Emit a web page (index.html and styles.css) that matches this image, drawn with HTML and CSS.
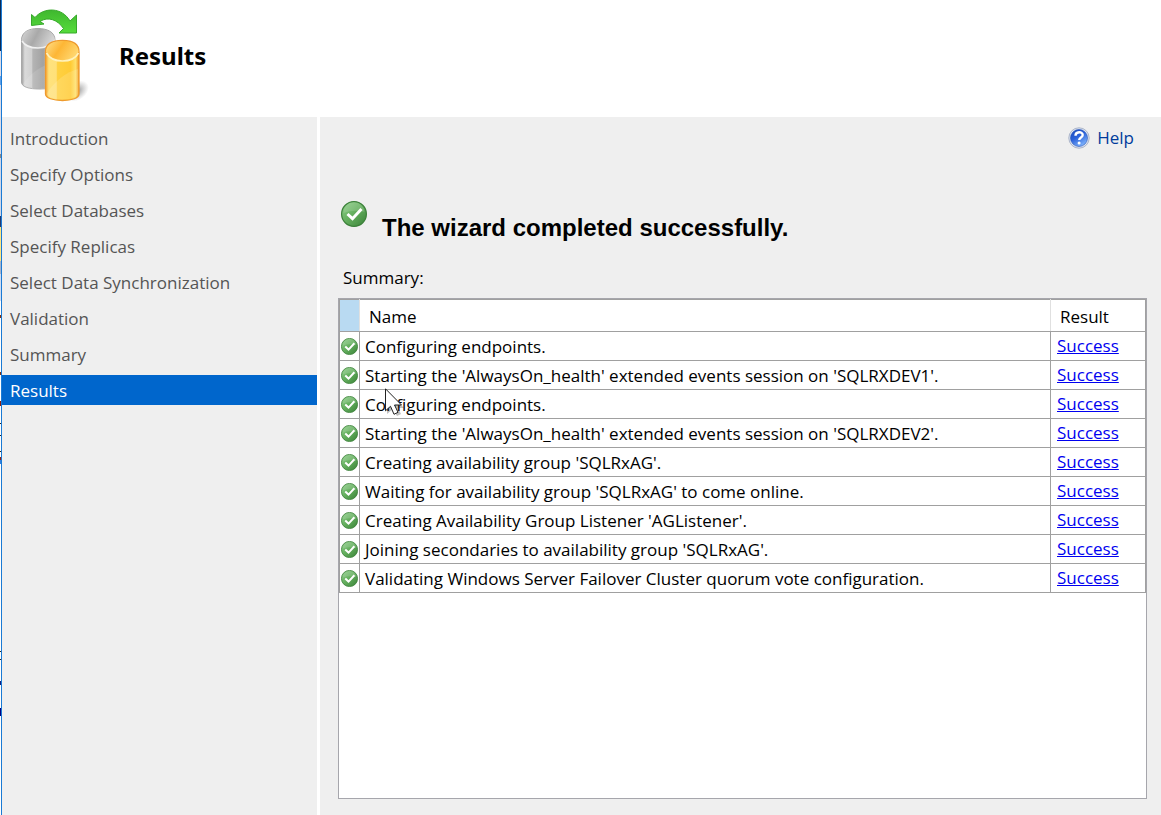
FILE: index.html
```html
<!DOCTYPE html>
<html lang="en">
<head>
  <meta charset="UTF-8" />
  <meta name="viewport" content="width=device-width, initial-scale=1" />
  <title>Results</title>
  <link rel="stylesheet" href="styles.css">
</head>
<body>
  <!-- shared icons -->
  <svg class="defs" width="0" height="0" aria-hidden="true">
    <defs>
      <linearGradient id="ok-fill" x1="0" y1="0" x2="1" y2="1">
        <stop offset="0" stop-color="#8fd08a" />
        <stop offset="0.5" stop-color="#62ad5c" />
        <stop offset="1" stop-color="#3a8238" />
      </linearGradient>
      <symbol id="ok" viewBox="0 0 26 26">
        <circle cx="13" cy="13" r="12.4" fill="url(#ok-fill)" stroke="#3b8039" stroke-width="1.2" />
        <path d="M2.500 12a10.500 10.500 0 0 1 21-1Q13 8 2.500 12z" fill="#fff" opacity="0.14" />
        <path d="M6.500 13l5 4.700L20.500 8" fill="none" stroke="#fff" stroke-width="3" />
      </symbol>
    </defs>
  </svg>

  <div class="window">
    <div class="backdrop" aria-hidden="true"></div>
    <div class="wizard">
      <header class="banner">
        <svg class="logo" viewBox="0 0 72 96" width="72" height="96" aria-hidden="true">
          <defs>
            <linearGradient id="grey-body">
              <stop offset="0" stop-color="#9b9b9b" />
              <stop offset="0.1" stop-color="#dadada" />
              <stop offset="0.3" stop-color="#d0d0d0" />
              <stop offset="0.34" stop-color="#b4b4b4" />
              <stop offset="0.65" stop-color="#a2a2a2" />
              <stop offset="0.9" stop-color="#d0d0d0" />
              <stop offset="1" stop-color="#aaa" />
            </linearGradient>
            <linearGradient id="grey-top" x1="0" y1="0" x2="1" y2="0.3">
              <stop offset="0" stop-color="#d8d8d8" />
              <stop offset="0.5" stop-color="#a9a9a9" />
              <stop offset="1" stop-color="#d4d4d4" />
            </linearGradient>
            <linearGradient id="gold-body">
              <stop offset="0" stop-color="#f6a02c" />
              <stop offset="0.1" stop-color="#ffe27c" />
              <stop offset="0.32" stop-color="#ffe07a" />
              <stop offset="0.36" stop-color="#ffd142" />
              <stop offset="0.75" stop-color="#ffcb35" />
              <stop offset="0.9" stop-color="#ffe06a" />
              <stop offset="1" stop-color="#f29a22" />
            </linearGradient>
            <linearGradient id="gold-top" x1="0" y1="0" x2="1" y2="0.4">
              <stop offset="0" stop-color="#ffe08c" />
              <stop offset="0.5" stop-color="#fdb635" />
              <stop offset="1" stop-color="#ffd56c" />
            </linearGradient>
            <linearGradient id="arrow" x1="0" y1="0" x2="0" y2="1">
              <stop offset="0" stop-color="#3fb72f" />
              <stop offset="1" stop-color="#56dc3c" />
            </linearGradient>
            <radialGradient id="shadow">
              <stop offset="0" stop-color="#777" stop-opacity="0.8" />
              <stop offset="1" stop-color="#999" stop-opacity="0" />
            </radialGradient>
          </defs>
          <ellipse cx="57" cy="83" rx="13" ry="9" fill="url(#shadow)" transform="rotate(-35 57 83)" />
          <path d="M1.500 32C1.500 24 9 20.500 18 20.500s17 3.500 17 11.500v46c-4 2-9 3-15 3C9 81 1.500 79 1.500 74z" fill="url(#grey-body)" stroke="#a8a8a8" />
          <path d="M1.500 32C3 24 10 21 18 21s16 3 17 11c-3 6-11 8-17 8S4 38 1.500 32z" fill="url(#grey-top)" />
          <path d="M2 33c3 5 9 7 16 7s14-3 17-8" fill="none" stroke="#f0f0f0" stroke-width="1.500" />
          <path d="M2.500 76c8-10 17-17 24-19v23C16 83 6 81 2.500 76z" fill="#fff" opacity="0.12" />
          <path d="M25.500 44c0-8.500 8-11.500 17-11.500S59 35.500 59 44v42c0 4-7 6.500-16.500 6.500S25.500 90 25.500 86z" fill="url(#gold-body)" stroke="#ee9a2e" stroke-width="1.300" />
          <path d="M26 43.500C26 36 34 33 42.500 33S58 36 58.500 43.500c-3 7-9 9-16 9s-14-3-16.500-9z" fill="url(#gold-top)" />
          <path d="M26.500 45c3 5.500 9 8 16 8s13-2.500 16-8" fill="none" stroke="#fff2bd" stroke-width="1.600" />
          <path d="M26.500 86c8-13 20-22 31.500-25v25c-3 7-27 8-31.500 0z" fill="#fff" opacity="0.15" />
          <path d="M11.500 6.500l3.500 3C24-1 42-1 50 13l6.500-6v18H39l4.500-4.500C38 12 28 8 20 13.500l4 2.500-12.500 1.500z" fill="url(#arrow)" stroke="#37a92b" />
        </svg>
        <h1>Results</h1>
      </header>

      <div class="body">
        <nav class="steps">
          <a href="#introduction">Introduction</a>
          <a href="#options">Specify Options</a>
          <a href="#databases">Select Databases</a>
          <a href="#replicas">Specify Replicas</a>
          <a href="#sync">Select Data Synchronization</a>
          <a href="#validation">Validation</a>
          <a href="#summary">Summary</a>
          <a class="active" href="#results" aria-current="step">Results</a>
        </nav>

        <main class="page">
          <a class="help" href="#help">
            <svg viewBox="0 0 22 22" width="22" height="22" aria-hidden="true">
              <defs>
                <linearGradient id="help-fill" x1="0" y1="0" x2="0.6" y2="1">
                  <stop offset="0" stop-color="#1c49b8" />
                  <stop offset="0.5" stop-color="#2c62da" />
                  <stop offset="1" stop-color="#7eb2fb" />
                </linearGradient>
              </defs>
              <circle cx="11" cy="11" r="10.200" fill="#dfe6f3" stroke="#a9b3c8" />
              <circle cx="11" cy="11" r="8.500" fill="url(#help-fill)" stroke="#2350b5" stroke-width="0.600" />
              <path d="M7.500 8.800c0-4.600 7.200-4.600 7.200-.8 0 2.500-3.500 2.500-3.500 5" fill="none" stroke="#fff" stroke-width="2.400" />
              <circle cx="11.100" cy="16" r="1.500" fill="#fff" />
            </svg>
            Help
          </a>

          <div class="status">
            <svg width="26" height="26" aria-hidden="true"><use href="#ok" /></svg>
            <h2>The wizard completed successfully.</h2>
          </div>

          <p class="label" id="summary-label">Summary:</p>
          <div class="list">
            <table aria-labelledby="summary-label">
              <thead>
                <tr><th class="mark"></th><th>Name</th><th class="result">Result</th></tr>
              </thead>
              <tbody>
                <tr>
                  <td class="mark"><svg width="17" height="17"><use href="#ok" /></svg></td>
                  <td>Configuring endpoints.</td>
                  <td class="result"><a href="#r1">Success</a></td>
                </tr>
                <tr>
                  <td class="mark"><svg width="17" height="17"><use href="#ok" /></svg></td>
                  <td>Starting the 'AlwaysOn_health' extended events session on 'SQLRXDEV1'.</td>
                  <td class="result"><a href="#r2">Success</a></td>
                </tr>
                <tr>
                  <td class="mark"><svg width="17" height="17"><use href="#ok" /></svg></td>
                  <td>Configuring endpoints.</td>
                  <td class="result"><a href="#r3">Success</a></td>
                </tr>
                <tr>
                  <td class="mark"><svg width="17" height="17"><use href="#ok" /></svg></td>
                  <td>Starting the 'AlwaysOn_health' extended events session on 'SQLRXDEV2'.</td>
                  <td class="result"><a href="#r4">Success</a></td>
                </tr>
                <tr>
                  <td class="mark"><svg width="17" height="17"><use href="#ok" /></svg></td>
                  <td>Creating availability group 'SQLRxAG'.</td>
                  <td class="result"><a href="#r5">Success</a></td>
                </tr>
                <tr>
                  <td class="mark"><svg width="17" height="17"><use href="#ok" /></svg></td>
                  <td>Waiting for availability group 'SQLRxAG' to come online.</td>
                  <td class="result"><a href="#r6">Success</a></td>
                </tr>
                <tr>
                  <td class="mark"><svg width="17" height="17"><use href="#ok" /></svg></td>
                  <td>Creating Availability Group Listener 'AGListener'.</td>
                  <td class="result"><a href="#r7">Success</a></td>
                </tr>
                <tr>
                  <td class="mark"><svg width="17" height="17"><use href="#ok" /></svg></td>
                  <td>Joining secondaries to availability group 'SQLRxAG'.</td>
                  <td class="result"><a href="#r8">Success</a></td>
                </tr>
                <tr>
                  <td class="mark"><svg width="17" height="17"><use href="#ok" /></svg></td>
                  <td>Validating Windows Server Failover Cluster quorum vote configuration.</td>
                  <td class="result"><a href="#r9">Success</a></td>
                </tr>
              </tbody>
            </table>
            <svg class="cursor" viewBox="0 0 20 30" width="20" height="30" aria-hidden="true">
              <path d="M2 3v23l6-5 4 7 4-2-3-6h6z" fill="#000" opacity="0.25" />
              <path d="M.5.800v22l5-4.500 3.500 8 4-2-3.500-7.300h7z" fill="#fff" stroke="#222" />
            </svg>
          </div>
        </main>
      </div>
    </div>
  </div>
</body>
</html>
```
FILE: styles.css
```css
/* RESET & BASE */
* { box-sizing: border-box; margin: 0; padding: 0; }
body {
  font-family: "Open Sans", "Noto Sans", sans-serif;
  font-size: 17px;
  line-height: 24px;
  background: #efefef;
  color: #000;
}
.defs { position: absolute; }

.window { display: flex; min-height: 100vh; }

/* sliver of the desktop left of the window */
.backdrop {
  flex: none;
  width: 1px;
  background: linear-gradient(#0a2a56 0 51px, #dcdce8 51px 76px, #5c9fe8 76px 85px, #dcdce8 85px 154px, #888 154px 158px, #cfd6e8 158px 216px, #223a70 216px 227px, #ffe680 227px 261px, #a8b4cc 261px 274px, #cfdcf2 274px 301px, #fff 301px 315px, #803010 315px 318px, #fff 318px 372px, #803010 372px 375px, #fff 375px 401px, #902010 401px 406px, #fff 406px 423px, #222 423px 424px, #fff 424px 435px, #222 435px 436px, #fff 436px 451px, #222 451px 452px, #fff 452px 457px, #902010 457px 460px, #3080e0 460px 464px, #fff 464px 651px, #222 651px 652px, #fff 652px 659px, #222 659px 660px, #fff 660px 681px, #102080 681px 685px, #fff 685px 708px, #000080 708px 716px, #fff 716px);
}

.wizard {
  flex: 1;
  min-width: 0;
  display: flex;
  flex-direction: column;
  border-left: 1px solid #1a7ad4;
}

.banner {
  display: flex;
  align-items: center;
  gap: 27px;
  height: 117px;
  padding: 0 18px 6px;
  background: #fff;
}
.banner h1 {
  font-family: "Noto Sans", sans-serif;
  font-size: 24px;
  line-height: 32px;
}

.body { flex: 1; display: flex; }

.steps {
  flex: none;
  width: 318px;
  display: flex;
  flex-direction: column;
  gap: 6px;
  padding-top: 6px;
  border-right: 3px solid #fff;
}
.steps a {
  padding: 4px 8px 2px;
  color: #555;
  text-decoration: none;
}
.steps .active { background: #0066cc; color: #fff; }

.page {
  flex: 1;
  min-width: 0;
  display: flex;
  flex-direction: column;
  padding: 9px 14px 16px 18px;
}

.help {
  align-self: flex-end;
  display: flex;
  align-items: center;
  gap: 7px;
  margin-right: 13px;
  color: #003c9c;
  text-decoration: none;
}

.status {
  display: flex;
  align-items: flex-start;
  gap: 15px;
  margin-top: 51px;
  padding-left: 3px;
}
.status h2 {
  padding-top: 11px;
  font-family: "Liberation Sans", Arial, sans-serif;
  font-size: 24px;
  line-height: 32px;
}

.label { margin: 22px 0 8px; padding-left: 5px; }

.list {
  flex: 1;
  position: relative;
  border: 1px solid #a6a6ac;
  background: #fff;
}
table {
  width: 100%;
  border-collapse: collapse;
  table-layout: fixed;
  border: 1px solid #a0a0a0;
}
th, td {
  height: 29px;
  padding: 2px 5px 0;
  border: 1px solid #a0a0a0;
  text-align: left;
  white-space: nowrap;
}
th {
  height: 32px;
  padding: 2px 9px 0;
  border-color: #a0a0a0 #e0e0e0 #a0a0a0 #e0e0e0;
  font-weight: normal;
}
.mark { width: 20px; padding: 0; }
th.mark { border-left-color: #a0a0a0; background: #b9daf2; }
th.result { border-right-color: #a0a0a0; }
.mark svg { display: block; margin-left: 1px; }
.result { width: 95px; }
td.result { padding: 0 6px; }
td a { color: #0000f0; }

.cursor { position: absolute; left: 46px; top: 89px; }
```
